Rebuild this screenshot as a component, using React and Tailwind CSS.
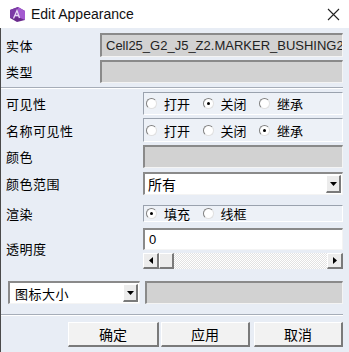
import React from 'react';

const CJK = "font-['Noto_Sans_CJK_SC',sans-serif]";
const sunken = 'border-t-2 border-l-2 border-t-[#8a8a8a] border-l-[#8a8a8a] border-b border-r border-b-[#f4f4f4] border-r-[#f4f4f4]';
const raised = 'border-t border-l border-t-white border-l-white border-b-2 border-r-2 border-b-[#7a7a7a] border-r-[#7a7a7a]';

function AppIcon() {
  return (
    <svg width="17" height="17" viewBox="0 0 17 17">
      <polygon points="1,4 9,1 16,5 16,14 8,16 1,12" fill="#6a2a8c" />
      <polygon points="9,1 16,5 16,14 9,11" fill="#a45ad0" />
      <polygon points="1,4 9,1 9,11 1,12" fill="#7c3aa6" />
      <path d="M4.5 12.5 L8 4.5 L10.5 12 M5.8 9.5 H9.6" stroke="#e8d8f4" strokeWidth="1.3" fill="none" />
    </svg>
  );
}

function Radio({ checked }) {
  return (
    <span className="relative inline-block w-[11px] h-[11px] rounded-full bg-white border border-t-[#808080] border-l-[#808080] border-b-[#e0e0e0] border-r-[#e0e0e0] shrink-0">
      {checked && <span className="absolute left-[3px] top-[3px] w-[3px] h-[3px] rounded-full bg-black" />}
    </span>
  );
}

function RadioGroup({ options, value, className }) {
  return (
    <div className={`w-[201px] flex items-center pl-[2px] bg-[#edf1f7] border border-t-[#9aa2ae] border-l-[#9aa2ae] border-b-white border-r-white ${className}`}>
      {options.map((opt) => (
        <div key={opt} className="flex items-center w-[56.5px]">
          <Radio checked={opt === value} />
          <span className={`ml-[7px] text-[13px] leading-none text-black ${CJK}`}>{opt}</span>
        </div>
      ))}
    </div>
  );
}

function Label({ children, w = 'w-[137px]' }) {
  return <div className={`${w} shrink-0 text-[13px] tracking-[0.5px] leading-none text-black ${CJK}`}>{children}</div>;
}

function ArrowButton() {
  return (
    <div className={`w-[15px] h-[18px] bg-[#ececec] ${raised} flex items-center justify-center`}>
      <svg width="7" height="4" viewBox="0 0 7 4"><polygon points="0,0 7,0 3.5,4" fill="#000" /></svg>
    </div>
  );
}

export default function App() {
  return (
    <div className="w-[349px] h-[352px] overflow-hidden bg-[#e8edf5] flex flex-col">
      {/* Title bar */}
      <div className="h-[28px] bg-white flex items-center shrink-0">
        <div className="ml-[9px]"><AppIcon /></div>
        <span className="ml-[5px] text-[14px] text-[#111] font-['Liberation_Sans',sans-serif] leading-none">Edit Appearance</span>
        <svg className="ml-auto mr-[9px]" width="13" height="13" viewBox="0 0 13 13">
          <path d="M1 1 L12 12 M12 1 L1 12" stroke="#222" strokeWidth="1.1" />
        </svg>
      </div>

      <div className="flex-1 flex flex-col pl-[5px] pr-[6px] pt-[5px] border-l border-l-[#4a4a4a]">
        {/* 实体 */}
        <div className="flex items-center h-[24px]">
          <Label w="w-[94px]">实体</Label>
          <div className={`flex-1 h-[24px] bg-[#d2d2d2] ${sunken} flex items-center pl-[4px] overflow-hidden whitespace-nowrap`}>
            <span className="text-[13px] text-[#222] font-['Liberation_Sans',sans-serif] leading-none">Cell25_G2_J5_Z2.MARKER_BUSHING24</span>
          </div>
        </div>

        {/* 类型 */}
        <div className="flex items-center h-[23px] mt-[3px]">
          <Label w="w-[94px]">类型</Label>
          <div className={`flex-1 h-[23px] bg-[#d2d2d2] ${sunken}`} />
        </div>

        <div className="mt-[4px] -ml-[5px] h-[2px] border-t border-t-[#a6adb8] border-b border-b-white" />

        {/* 可见性 */}
        <div className="flex items-center mt-[3px]">
          <Label>可见性</Label>
          <RadioGroup className="h-[23px]" options={['打开', '关闭', '继承']} value="关闭" />
        </div>

        {/* 名称可见性 */}
        <div className="flex items-center mt-[3px]">
          <Label>名称可见性</Label>
          <RadioGroup className="h-[24px]" options={['打开', '关闭', '继承']} value="继承" />
        </div>

        {/* 颜色 */}
        <div className="flex items-center mt-[3px]">
          <Label>颜色</Label>
          <div className={`w-[201px] h-[23px] bg-[#d2d2d2] ${sunken}`} />
        </div>

        {/* 颜色范围 */}
        <div className="flex items-center mt-[4px]">
          <Label>颜色范围</Label>
          <div className={`w-[201px] h-[23px] bg-white ${sunken} flex items-center justify-between pl-[3px] pr-[1px]`}>
            <span className={`text-[14px] leading-none text-black ${CJK}`}>所有</span>
            <ArrowButton />
          </div>
        </div>

        {/* 渲染 */}
        <div className="flex items-center mt-[10px]">
          <Label>渲染</Label>
          <RadioGroup className="h-[17px]" options={['填充', '线框']} value="填充" />
        </div>

        {/* 透明度 */}
        <div className="flex items-center mt-[6px]">
          <Label>透明度</Label>
          <div className="w-[201px] flex flex-col">
            <div className={`h-[22px] bg-white ${sunken} flex items-center pl-[4px]`}>
              <span className="text-[13px] leading-none text-black font-['Liberation_Sans',sans-serif]">0</span>
            </div>
            <div className="mt-[3px] h-[16px] flex bg-[repeating-conic-gradient(#e2e2e2_0%_25%,#ffffff_0%_50%)] bg-[length:2px_2px]">
              <div className={`w-[16px] h-[16px] bg-[#ececec] ${raised} flex items-center justify-center`}>
                <svg width="4" height="7" viewBox="0 0 4 7"><polygon points="4,0 4,7 0,3.5" fill="#000" /></svg>
              </div>
              <div className={`w-[15px] h-[16px] bg-[#ececec] ${raised}`} />
              <div className="flex-1" />
              <div className={`w-[16px] h-[16px] bg-[#ececec] ${raised} flex items-center justify-center`}>
                <svg width="4" height="7" viewBox="0 0 4 7"><polygon points="0,0 0,7 4,3.5" fill="#000" /></svg>
              </div>
            </div>
          </div>
        </div>

        {/* 图标大小 */}
        <div className="flex items-center mt-[12px] h-[23px]">
          <div className={`w-[132px] h-[23px] ml-[2px] bg-white ${sunken} flex items-center justify-between pl-[5px] pr-[1px]`}>
            <span className={`text-[13px] tracking-[0.5px] leading-none text-black ${CJK}`}>图标大小</span>
            <ArrowButton />
          </div>
          <div className={`ml-[5px] flex-1 h-[23px] bg-[#d2d2d2] ${sunken}`} />
        </div>

        <div className="mt-[10px] -ml-[5px] h-[2px] border-t border-t-[#a6adb8] border-b border-b-white" />

        {/* Buttons */}
        <div className="flex justify-end mt-[6px] gap-[2px]">
          {['确定', '应用', '取消'].map((t, i) => (
            <button
              key={t}
              className={`${i === 0 ? 'w-[91px]' : i === 1 ? 'w-[89px] mr-[2px]' : 'w-[89px]'} h-[25px] bg-[#f2f2f2] ${raised} text-[14px] leading-none text-black ${CJK}`}
            >
              {t}
            </button>
          ))}
        </div>
      </div>
    </div>
  );
}
